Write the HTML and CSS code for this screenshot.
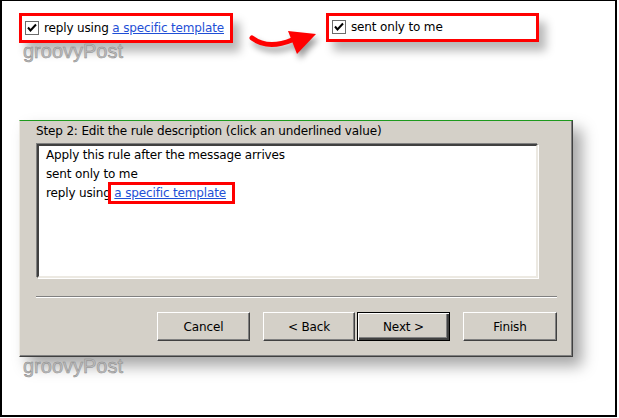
FILE: index.html
```html
<!DOCTYPE html>
<html lang="en">
    <head>
        <meta charset="UTF-8" />
        <title>Rules Wizard - Step 2</title>
        <link rel="stylesheet" href="styles.css">
    </head>
    <body>
        <div class="frame">
            <div class="callouts">
                <div class="callout callout-first">
                    <svg class="checkbox" width="14" height="14" viewBox="0 0 14 14">
                        <rect x="0.5" y="0.5" width="13" height="13" fill="#fff" stroke="#6b6b6b" />
                        <path d="M3 6.5 L5.5 9.5 L11 3.5" fill="none" stroke="#000" stroke-width="2" />
                    </svg>
                    <span>reply using <a href="#">a specific template</a></span>
                </div>
                <svg class="arrow" width="80" height="36" viewBox="0 0 80 36">
                    <path d="M12 13 Q28 25 52 15" fill="none" stroke="#f00" stroke-width="5" stroke-linecap="round" />
                    <polygon points="48,6 76,9 57,29" fill="#f00" />
                </svg>
                <div class="callout callout-second">
                    <svg class="checkbox" width="14" height="14" viewBox="0 0 14 14">
                        <rect x="0.5" y="0.5" width="13" height="13" fill="#fff" stroke="#6b6b6b" />
                        <path d="M3 6.5 L5.5 9.5 L11 3.5" fill="none" stroke="#000" stroke-width="2" />
                    </svg>
                    <span>sent only to me</span>
                </div>
            </div>
            <div class="watermark watermark-top">groovyPost</div>

            <div class="dialog">
                <div class="step-label">Step 2: Edit the rule description (click an underlined value)</div>
                <div class="listbox">
                    <div>Apply this rule after the message arrives</div>
                    <div>sent only to me</div>
                    <div>reply using <a href="#" class="marked">a specific template</a></div>
                </div>
                <div class="separator"></div>
                <div class="buttons">
                    <button>Cancel</button>
                    <button class="back">&lt; Back</button>
                    <button class="default">Next &gt;</button>
                    <button class="finish">Finish</button>
                </div>
            </div>
            <div class="watermark watermark-bottom">groovyPost</div>
        </div>
    </body>
</html>
```

FILE: styles.css
```css
body {
    margin: 0;
    background-color: #fff;
    font-family: "DejaVu Sans", Tahoma, sans-serif;
    font-size: 12px;
    letter-spacing: -0.15px;
    color: #000;
}
.frame {
    box-sizing: border-box;
    width: 617px;
    height: 417px;
    border: 2px solid #000;
    border-top-width: 1px;
    overflow: hidden;
}
a {
    color: #1f4fd6;
    text-decoration: underline;
}

/* top callouts */
.callouts {
    display: flex;
    align-items: flex-start;
    height: 30px;
    margin: 12px 0 0 17px;
}
.callout {
    box-sizing: border-box;
    display: flex;
    align-items: center;
    gap: 5px;
    height: 30px;
    padding: 0 0 1px 3px;
    background-color: #fff;
    border: 3px solid #f00;
    box-shadow: 7px 9px 10px rgba(0, 0, 0, 0.28);
}
.callout-first {
    width: 214px;
}
.callout-second {
    width: 213px;
    height: 29px;
    margin-left: 6px;
}
.checkbox {
    flex: none;
}
.arrow {
    flex: none;
    margin: 12px 0 0 7px;
    filter: drop-shadow(3px 5px 3px rgba(0, 0, 0, 0.4));
}

.watermark {
    margin-left: 21px;
    font-family: "Liberation Sans", Arial, sans-serif;
    font-size: 20px;
    line-height: 20px;
    letter-spacing: 0;
    color: #bdbdbd;
    -webkit-text-stroke: 0.5px #8a8a8a;
}
.watermark-top {
    margin-top: -2px;
}
.watermark-bottom {
    margin-top: -1px;
}

/* wizard dialog */
.dialog {
    box-sizing: border-box;
    width: 554px;
    height: 237px;
    margin: 59px 0 0 17px;
    padding: 2px 0 0 16px;
    background-color: #d4d0c8;
    border-top: 1px solid #1e9a1e;
    border-left: 1px solid #ece9e2;
    border-right: 1px solid #404040;
    border-bottom: 1px solid #404040;
    box-shadow: inset -1px -1px #808080, 9px 9px 14px rgba(0, 0, 0, 0.35);
}
.step-label {
    line-height: 16px;
}
.listbox {
    box-sizing: border-box;
    width: 501px;
    height: 134px;
    margin: 5px 0 0 1px;
    padding: 0 7px;
    background-color: #fff;
    border-top: 2px solid #404040;
    border-left: 2px solid #404040;
    border-right: 2px solid #ece9e2;
    border-bottom: 2px solid #ece9e2;
    box-shadow: -1px -1px #808080, 1px 1px #fff;
    line-height: 19px;
}
.marked {
    position: relative;
}
.marked::after {
    content: "";
    position: absolute;
    left: -6px;
    right: -9px;
    top: -4px;
    bottom: -4px;
    border: 3px solid #f00;
}
.separator {
    width: 521px;
    margin-top: 18px;
    border-top: 1px solid #808080;
    border-bottom: 1px solid #fff;
}
.buttons {
    display: flex;
    justify-content: flex-end;
    width: 521px;
    margin-top: 14px;
}
button {
    box-sizing: border-box;
    width: 93px;
    height: 29px;
    padding: 0;
    font-family: inherit;
    font-size: 12px;
    letter-spacing: -0.15px;
    color: #000;
    background-color: #d4d0c8;
    border: 1px solid;
    border-color: #fff #404040 #404040 #fff;
    box-shadow: inset -1px -1px #808080;
}
.back {
    width: 92px;
    margin-left: 13px;
}
.default {
    margin-left: 2px;
    border: 1px solid #000;
    box-shadow: inset 1px 1px #fff, inset -2px -2px #404040, inset -3px -3px #808080;
}
.finish {
    width: 94px;
    margin-left: 13px;
}
```
